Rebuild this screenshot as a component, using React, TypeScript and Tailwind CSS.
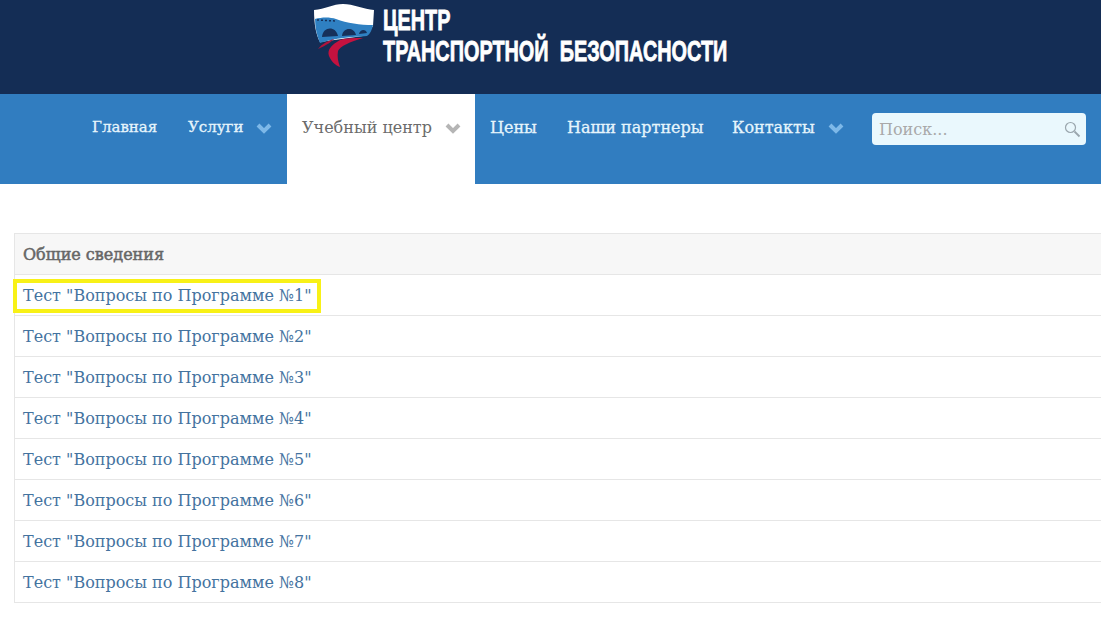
import React from 'react';

const serif = { fontFamily: '"DejaVu Serif", serif' };

function Logo() {
  return (
    <svg width="62" height="66" viewBox="313 3 62 66" className="shrink-0">
      {/* shield */}
      <path d="M314 10 C325 9 333 4 343 4 C353 4 364 9 374 10 L373 26 C369 32 367 35 363 36 L320 42 C316 35 314 24 314 10 Z" fill="#ffffff" />
      <path d="M315 19 C322 17 330 17 336 19 C347 23 360 25 373 25 C372 30 370 34 367 36 C352 37 335 38 320 43 C317 36 315 28 315 19 Z" fill="#2f80c2" />
      {/* bridge */}
      <path d="M322 37 C323 26 336 26 338 36 Z M342 36 C343 27 354 27 356 35 Z M359 34 C360 29 366 29 367 33 Z" fill="#16305a" />
      <path d="M317 20 L336 21" stroke="#16305a" strokeWidth="1.5" strokeDasharray="2 2" />
      {/* road */}
      <path d="M318 49 C322 44 327 41 334 39 C331 42 327 45 318 49 Z" fill="#b0143c" />
      <path d="M363 38 C354 38 346 38 340 40 C331 45 327 50 329 56 C331 61 335 65 340 67 C338 62 337 56 338 51 C340 46 350 42 363 38 Z" fill="#c4123f" />
    </svg>
  );
}

function Chevron({ className }: { className: string }) {
  return (
    <svg width="16" height="12" viewBox="0 0 16 12" fill="none" className={className}>
      <path d="M2 3 L8 9 L14 3" stroke="currentColor" strokeWidth="4" />
    </svg>
  );
}

function NavItem({
  label,
  arrow,
  active,
  small,
  width,
}: {
  label: string;
  arrow?: boolean;
  active?: boolean;
  small?: boolean;
  width: string;
}) {
  return (
    <div
      className={
        width +
        (active
          ? ' h-full flex items-start gap-[13px] bg-white pl-[15px] pt-[23px] text-[#6b6b6b]'
          : ' h-full flex items-start gap-[13px] pl-[15px] pt-[23px] text-[#e6f5fc] [-webkit-text-stroke:0.3px_#e6f5fc]')
      }
    >
      <span className={small ? 'text-[15px] leading-[21px] whitespace-nowrap' : 'text-[16px] leading-[21px] whitespace-nowrap'}>
        {label}
      </span>
      {arrow && <Chevron className={active ? 'mt-[5px] text-[#b5b5b5]' : 'mt-[5px] text-[#7db8e8]'} />}
    </div>
  );
}

const tests = [1, 2, 3, 4, 5, 6, 7, 8];

export default function App() {
  return (
    <div className="w-[1101px] h-[618px] overflow-hidden bg-white" style={serif}>
      {/* Header */}
      <div className="h-[94px] bg-[#142d55] flex items-start pl-[313px] pt-[3px]">
        <Logo />
        <div
          className="ml-[8px] mt-[2px] origin-left scale-x-[0.685] text-white font-bold text-[29px] leading-[31px] whitespace-nowrap [-webkit-text-stroke:0.8px_#ffffff]"
          style={{ fontFamily: '"Liberation Sans", sans-serif' }}
        >
          <div>ЦЕНТР</div>
          <div>ТРАНСПОРТНОЙ&nbsp;&nbsp;БЕЗОПАСНОСТИ</div>
        </div>
      </div>

      {/* Nav */}
      <div className="h-[90px] bg-[#317dc0] flex items-start pl-[77px]">
        <NavItem label="Главная" small width="w-[96px]" />
        <NavItem label="Услуги" arrow small width="w-[114px]" />
        <NavItem label="Учебный центр" arrow active width="w-[188px]" />
        <NavItem label="Цены" width="w-[77px]" />
        <NavItem label="Наши партнеры" width="w-[165px]" />
        <NavItem label="Контакты" arrow width="w-[140px]" />
        <div className="ml-[15px] mt-[19px] w-[214px] h-[32px] rounded-[4px] bg-[#eaf8fd] flex items-center justify-between pl-[7px] pr-[5px]">
          <span className="pt-[2px] text-[16px] text-[#a9a9a9]">Поиск...</span>
          <svg width="17" height="17" viewBox="0 0 17 17" fill="none" stroke="#9aa6ad">
            <circle cx="6.5" cy="6.5" r="5" strokeWidth="1.2" />
            <path d="M10.5 10.5 L15.5 15.5" strokeWidth="1.8" />
          </svg>
        </div>
      </div>

      {/* Table */}
      <div className="mt-[49px] ml-[14px] border-l border-[#e6e6e6] relative">
        <div className="h-[42px] bg-[#f7f7f7] border-y border-[#e6e6e6] pl-[8px] pt-[1px] flex items-center text-[16px] text-[#666666] [-webkit-text-stroke:0.5px_#666666]">
          Общие сведения
        </div>
        {tests.map((n) => (
          <div
            key={n}
            className="h-[41px] border-b border-[#e6e6e6] pl-[8px] pt-[2px] flex items-center text-[16px] text-[#44739f]"
          >
            {`Тест "Вопросы по Программе №${n}"`}
          </div>
        ))}
        <div className="absolute left-[-2px] top-[46px] w-[308px] h-[34px] border-4 border-[#f8f117]" />
      </div>
    </div>
  );
}
